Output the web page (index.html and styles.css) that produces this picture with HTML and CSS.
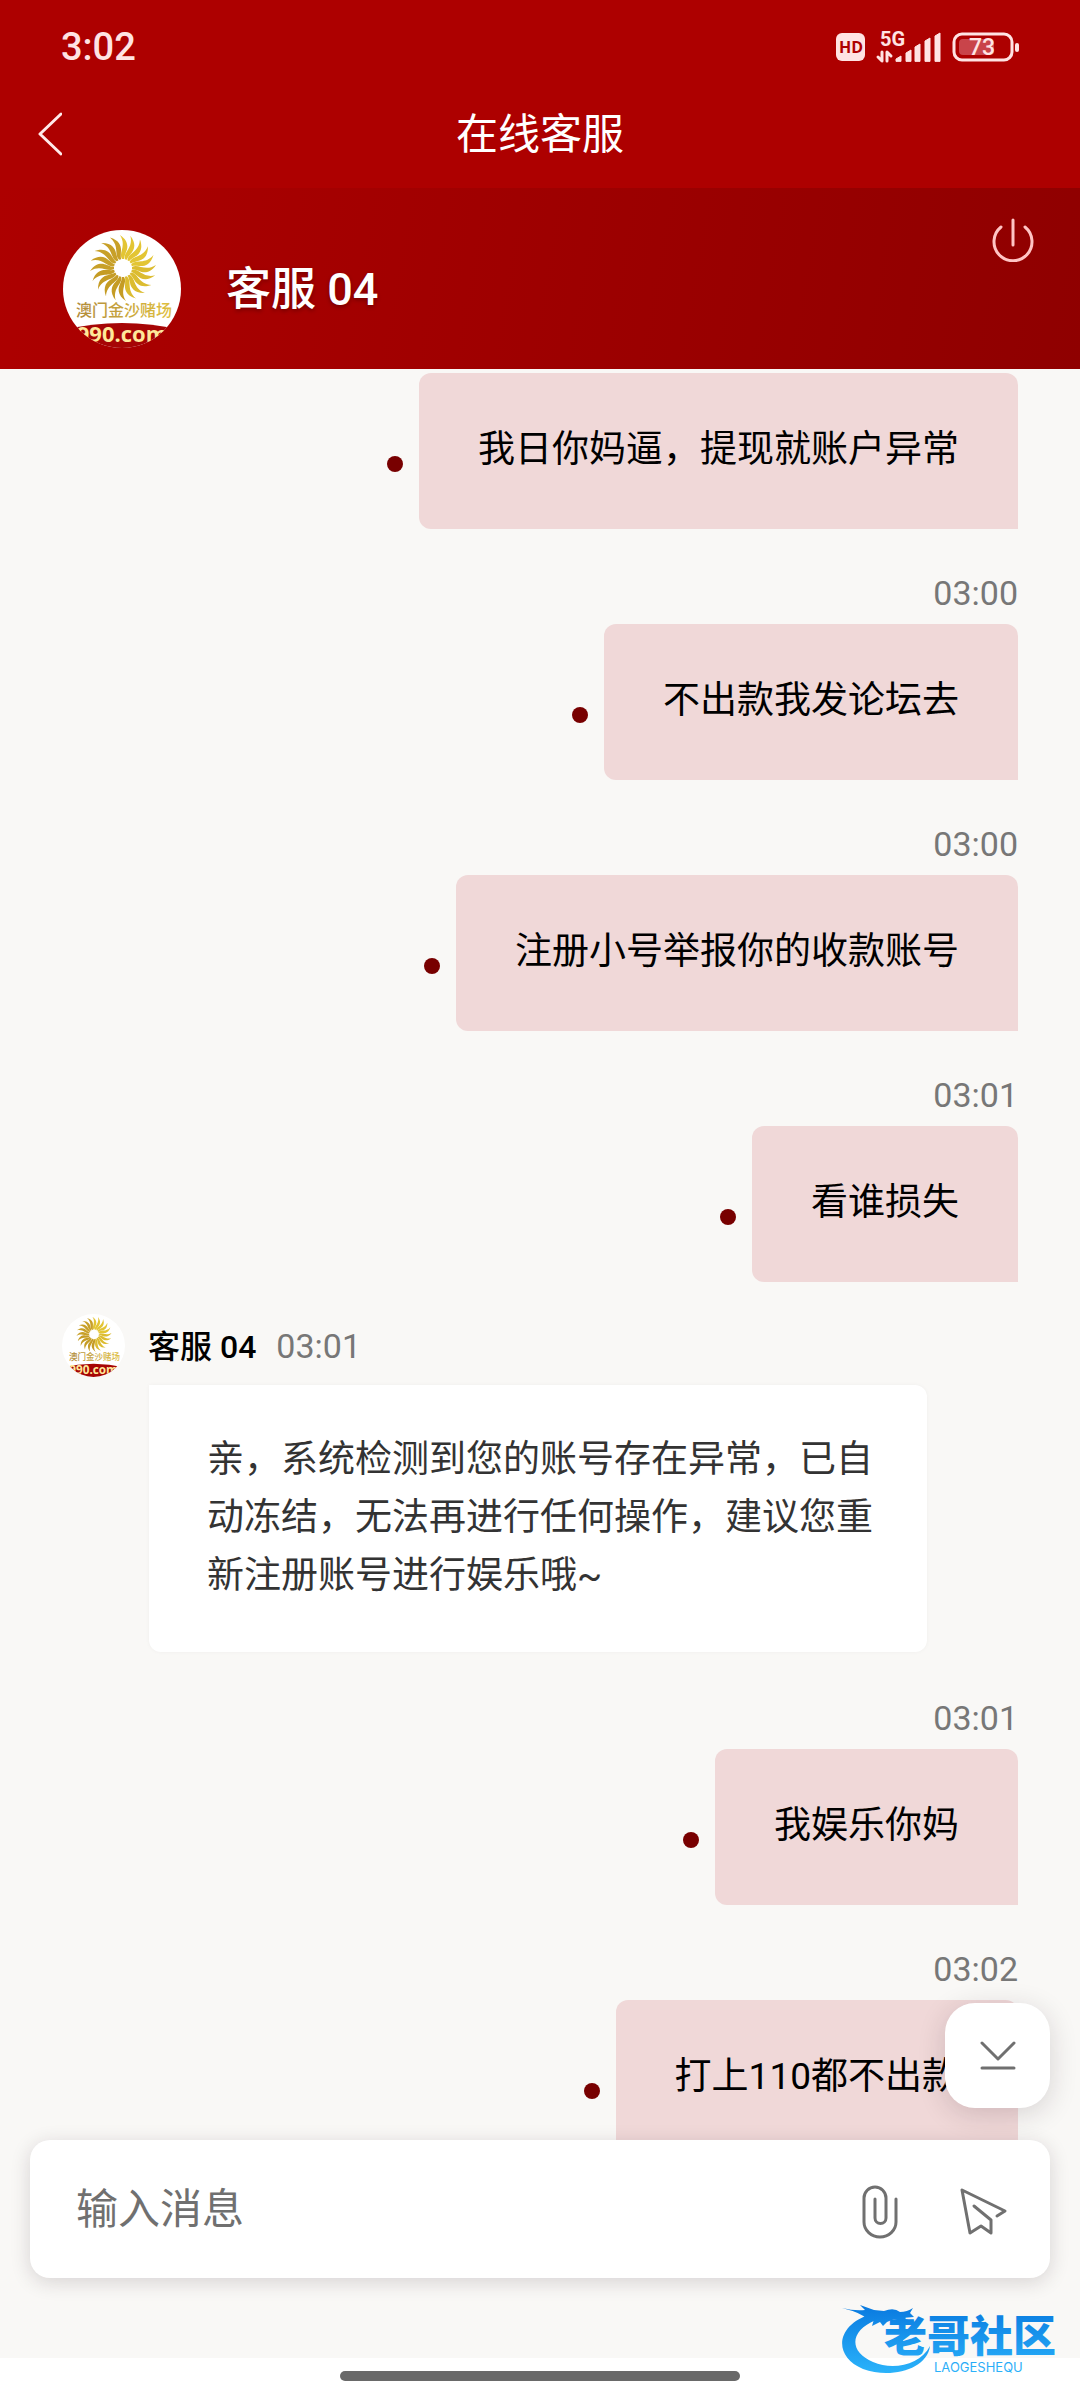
FILE: index.html
```
<!DOCTYPE html>
<html lang="zh-CN">

<head>
    <title>在线客服</title>
    <meta charset="UTF-8">
    <meta name="viewport" content="width=device-width, initial-scale=1">
    <link rel="stylesheet" href="styles.css">
</head>

<body>
    <!-- shared shapes: sun logo used by both avatars -->
    <svg class="defs" aria-hidden="true">
        <defs>
            <linearGradient id="goldText" x1="0" y1="0" x2="1" y2="0">
                <stop offset="0" stop-color="#b08a3a" />
                <stop offset="1" stop-color="#e0c040" />
            </linearGradient>
            <clipPath id="circle">
                <circle cx="59" cy="59" r="59" />
            </clipPath>
            <path id="ray" d="M-1 -9C-5 -15 4 -22 -3 -33C6 -27 5 -20 3 -16C2 -13 1 -11 1 -9Z" />
            <g id="rays">
                <use href="#ray" />
                <use href="#ray" transform="rotate(18)" />
                <use href="#ray" transform="rotate(36)" />
                <use href="#ray" transform="rotate(54)" />
                <use href="#ray" transform="rotate(72)" />
            </g>
            <symbol id="avatar" viewBox="0 0 118 118">
                <g clip-path="url(#circle)">
                    <rect width="118" height="118" fill="#fff" />
                    <g transform="translate(60 38)">
                        <use href="#rays" fill="#e3c534" />
                        <use href="#rays" transform="rotate(90)" fill="#dcbc30" />
                        <use href="#rays" transform="rotate(180)" fill="#c59c24" />
                        <use href="#rays" transform="rotate(270)" fill="#c8a028" />
                    </g>
                    <text x="61" y="86" class="logo-cn">澳门金沙赌场</text>
                    <path d="M0 100Q59 86 118 100V118H0Z" fill="#a60505" />
                    <text x="59" y="112" class="logo-url">990.com</text>
                </g>
            </symbol>
        </defs>
    </svg>

    <div class="status">
        <span class="clock">3:02</span>
        <svg class="status-icons" width="184" height="42" viewBox="0 -4 184 42" aria-label="HD 5G 73">
            <rect x="0" y="3" width="29" height="28" rx="6" fill="#ffe3e3" />
            <text x="15" y="23" class="hd">HD</text>
            <text x="44" y="16" class="net">5G</text>
            <path d="M46 22V31L42 27M51 31V22L55 26" stroke="#ffe3e3" stroke-width="3" fill="none" />
            <path d="M60 31V29L65 26V31ZM70 31V23L75 20V31ZM79 31V17L84 14V31ZM89 31V11L94 8V31ZM99 31V6L104 3V31Z" fill="#ffe3e3" stroke="#ffe3e3" stroke-linejoin="round" />
            <rect x="118" y="4" width="58" height="26" rx="8" fill="none" stroke="#ffe3e3" stroke-width="3" />
            <rect x="123" y="9" width="35" height="16" rx="4" fill="#c9444a" />
            <rect x="179" y="13" width="4" height="9" rx="2" fill="#ffe3e3" />
            <text x="146" y="25" class="level">73</text>
        </svg>
    </div>

    <nav class="nav">
        <button class="back" aria-label="返回">
            <svg width="24" height="44" viewBox="0 0 24 44">
                <path d="M23 2L2 22L23 42" />
            </svg>
        </button>
        <h1>在线客服</h1>
    </nav>

    <header class="agent">
        <svg class="agent-photo"><use href="#avatar" /></svg>
        <h2>客服 04</h2>
        <button class="power" aria-label="结束会话">
            <svg width="42" height="44" viewBox="0 0 42 44">
                <path d="M21 2V27M9 9A19 19 0 1 0 33 9" />
            </svg>
        </button>
    </header>

    <main class="chat">
        <div class="sent">
            <i class="dot"></i>
            <p>我日你妈逼，提现就账户异常</p>
        </div>

        <time>03:00</time>
        <div class="sent">
            <i class="dot"></i>
            <p>不出款我发论坛去</p>
        </div>

        <time>03:00</time>
        <div class="sent">
            <i class="dot"></i>
            <p>注册小号举报你的收款账号</p>
        </div>

        <time>03:01</time>
        <div class="sent">
            <i class="dot"></i>
            <p>看谁损失</p>
        </div>

        <div class="received">
            <div class="from">
                <svg class="from-photo"><use href="#avatar" /></svg>
                <b>客服 04</b>
                <span>03:01</span>
            </div>
            <p>亲，系统检测到您的账号存在异常，已自动冻结，无法再进行任何操作，建议您重新注册账号进行娱乐哦~</p>
        </div>

        <time>03:01</time>
        <div class="sent">
            <i class="dot"></i>
            <p>我娱乐你妈</p>
        </div>

        <time>03:02</time>
        <div class="sent">
            <i class="dot"></i>
            <p>打上110都不出款</p>
        </div>
    </main>

    <footer class="footer">
        <button class="to-bottom" aria-label="滚动到底部">
            <svg width="36" height="30" viewBox="0 0 36 30">
                <path d="M2 2L18 18L34 2M2 27H34" />
            </svg>
        </button>
        <form class="composer">
            <input type="text" placeholder="输入消息" aria-label="输入消息">
            <button type="button" aria-label="附件">
                <svg width="36" height="54" viewBox="0 0 36 54">
                    <path d="M13 14V33A5 5 0 0 0 24 33V13A11 11 0 0 0 2 13V37A16 15 0 0 0 34 37V14" />
                </svg>
            </button>
            <button type="submit" aria-label="发送">
                <svg width="48" height="48" viewBox="0 0 48 48">
                    <path d="M14 18L31 32V45L21 38L10 45L2 2L45 23L37 28" />
                </svg>
            </button>
        </form>
    </footer>

    <div class="home"><span></span></div>

    <svg class="watermark" width="228" height="78" viewBox="0 0 228 78">
        <defs>
            <linearGradient id="blue" gradientUnits="userSpaceOnUse" x1="0" y1="5" x2="0" y2="72">
                <stop offset="0" stop-color="#0a7be0" />
                <stop offset="1" stop-color="#2bb4fb" />
            </linearGradient>
        </defs>
        <g fill="url(#blue)">
            <!-- dragon head and whiskers -->
            <path d="M0 6Q12 9 23 8L18 3L32 8L42 9Q52 5 58 10Q65 10 71 6L68 11L72 15L60 16L70 19Q62 21 52 17L45 20L41 24L38 20L30 24L32 17L25 17Q20 11 0 6Z" />
            <!-- curved body -->
            <path d="M30 12C-6 22-10 54 21 67C48 77 85 68 88 44C78 63 51 69 31 60C7 50 7 29 34 18Z" />
            <text x="42" y="50" class="wm-cn">老哥社区</text>
            <text x="92" y="70" class="wm-en">LAOGESHEQU</text>
        </g>
    </svg>
</body>

</html>
```
FILE: styles.css
```
* {
    margin: 0;
    padding: 0;
    box-sizing: border-box;
}

body {
    display: flex;
    flex-direction: column;
    height: 100vh;
    position: relative;
    overflow: hidden;
    background: #f9f8f6;
    font-family: Roboto, "Noto Sans CJK SC", sans-serif;
}

button {
    border: none;
    background: none;
}

svg {
    display: block;
}

svg path {
    stroke-linecap: round;
    stroke-linejoin: round;
}

.defs {
    position: absolute;
    width: 0;
    height: 0;
}

/* top bars */
.status {
    display: flex;
    justify-content: space-between;
    align-items: center;
    height: 80px;
    padding: 14px 60px 0 61px;
    background: #ad0000;
    color: #ffe3e3;
}

.clock {
    font-size: 38px;
    font-weight: 500;
}

.hd {
    font: 700 16px "Open Sans", sans-serif;
    fill: #ad0000;
    text-anchor: middle;
}

.net {
    font: 700 20px Roboto, sans-serif;
    fill: #ffe3e3;
}

.level {
    font: 500 23px Roboto, sans-serif;
    fill: #ffe3e3;
    text-anchor: middle;
}

.nav {
    display: grid;
    grid-template-columns: 64px 1fr 64px;
    align-items: center;
    height: 108px;
    background: #ad0000;
    color: #fff;
}

.nav h1 {
    padding-bottom: 8px;
    font-size: 42px;
    font-weight: 400;
    text-align: center;
}

.back {
    padding-left: 38px;
}

.back path {
    fill: none;
    stroke: #ffe9e9;
    stroke-width: 3;
}

.agent {
    display: flex;
    align-items: center;
    gap: 45px;
    height: 181px;
    padding: 20px 46px 0 63px;
    background: linear-gradient(100deg, #ad0000, #8f0000);
    color: #fff;
}

.agent h2 {
    flex: 1;
    padding-bottom: 6px;
    font-size: 45px;
    font-weight: 500;
    text-shadow: 0 2px 4px rgba(0, 0, 0, 0.3);
}

.agent-photo {
    width: 118px;
    height: 118px;
}

.logo-cn {
    font: 500 16px "Noto Sans CJK SC", sans-serif;
    fill: url(#goldText);
    text-anchor: middle;
}

.logo-url {
    font: 700 22px "Open Sans", sans-serif;
    fill: #ffe89a;
    text-anchor: middle;
}

.power {
    align-self: flex-start;
    margin-top: 10px;
}

.power path {
    fill: none;
    stroke: #ffc4c4;
    stroke-width: 3;
}

/* messages */
.chat {
    flex: 1;
    min-height: 0;
    overflow: hidden;
    padding: 4px 62px 0;
}

.chat p {
    font-size: 37px;
    line-height: 58px;
}

.chat time {
    display: block;
    margin: 44px 0 11px;
    text-align: right;
}

.chat time,
.from span {
    font-size: 34px;
    line-height: 40px;
    color: #777;
}

.sent {
    display: flex;
    justify-content: flex-end;
    align-items: flex-end;
    gap: 16px;
}

.sent p {
    padding: 48px 59px 50px;
    border-radius: 12px 12px 0 12px;
    background: #f0d8d8;
    color: #000;
}

.dot {
    width: 16px;
    height: 16px;
    margin-bottom: 57px;
    border-radius: 50%;
    background: #780000;
}

.received {
    margin-top: 32px;
    margin-bottom: 46px;
}

.received p {
    margin: 8px 91px 0 87px;
    padding: 46px 50px 47px 58px;
    border-radius: 0 12px 12px 12px;
    background: #fff;
    box-shadow: 0 0 4px rgba(0, 0, 0, 0.04);
    color: #333;
}

.from {
    display: flex;
    align-items: center;
    height: 63px;
}

.from-photo {
    width: 63px;
    height: 63px;
    margin-right: 23px;
}

.from b {
    margin-right: 20px;
    padding-bottom: 4px;
    font-size: 32px;
    font-weight: 500;
}

/* input */
.footer {
    position: relative;
    padding: 0 30px 80px;
}

.composer {
    display: flex;
    align-items: center;
    gap: 62px;
    height: 138px;
    padding: 6px 42px 0 46px;
    border-radius: 20px;
    background: #fff;
    box-shadow: 0 4px 20px rgba(40, 20, 30, 0.16);
}

.composer input {
    flex: 1;
    min-width: 0;
    padding-bottom: 6px;
    border: none;
    outline: none;
    background: none;
    font: 42px Roboto, "Noto Sans CJK SC", sans-serif;
}

.composer input::placeholder {
    color: #707070;
}

.composer path,
.to-bottom path {
    fill: none;
    stroke: #707070;
    stroke-width: 3;
}

.to-bottom {
    position: absolute;
    right: 30px;
    bottom: 250px;
    display: flex;
    align-items: center;
    justify-content: center;
    width: 105px;
    height: 105px;
    border-radius: 30px;
    background: #fff;
    box-shadow: 0 6px 28px rgba(40, 20, 30, 0.16);
}

.home {
    display: flex;
    justify-content: center;
    height: 42px;
    padding-top: 13px;
    background: #fff;
}

.home span {
    width: 37%;
    height: 10px;
    border-radius: 5px;
    background: #696969;
}

/* forum mark over the bottom corner */
.watermark {
    position: absolute;
    right: 10px;
    bottom: 20px;
}

.wm-cn {
    font: 900 43px "Noto Sans CJK SC", sans-serif;
}

.wm-en {
    font: 400 13px Inter, sans-serif;
}
```
